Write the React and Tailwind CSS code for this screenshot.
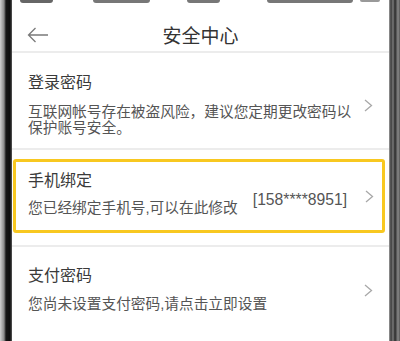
import React from "react";

const font = { fontFamily: '"Liberation Sans", "Noto Sans CJK SC", sans-serif' };

function Chevron({ className = "" }) {
  return (
    <svg width="9" height="13" viewBox="0 0 9 13" className={className}>
      <path d="M1 1 L7.5 6.5 L1 12" fill="none" stroke="#a8a8a8" strokeWidth="1.3" />
    </svg>
  );
}

export default function App() {
  return (
    <div className="w-[400px] h-[341px] overflow-hidden flex bg-white" style={font}>
      <div className="w-[12px] h-full bg-[linear-gradient(to_right,#d0d0d0_0px,#8a8a8a_4px,#151515_6px,#0d0d0d_10px,#5a5a5a_12px)]" />
      <div className="flex-1 flex flex-col bg-white">
        <div className="h-[4px] relative">
          <div className="absolute top-0 left-[8px] w-[33px] h-[3px] bg-[#666] rounded-b" />
          <div className="absolute top-0 left-[81px] w-[57px] h-[3px] bg-[#777] rounded-b" />
          <div className="absolute top-0 left-[175px] w-[33px] h-[3px] bg-[#777] rounded-b" />
          <div className="absolute top-0 left-[255px] w-[86px] h-[3px] bg-[#777] rounded-b" />
          <div className="absolute top-0 left-[348px] w-[20px] h-[2px] bg-[#999] rounded-b" />
        </div>
        <div className="h-[47px] flex items-center pt-[14px] relative">
          <svg width="22" height="16" viewBox="0 0 22 16" className="ml-[15px]">
            <path d="M21 8 H1.5 M8.5 1 L1.5 8 L8.5 15" fill="none" stroke="#7a7a7a" strokeWidth="1.3" />
          </svg>
          <div className="absolute left-0 right-0 top-[21px] text-center text-[19px] leading-[24px] text-[#333]">安全中心</div>
        </div>
        <div className="h-[2px] bg-[#ececec]" />

        <div className="flex items-center pl-[16px] pr-[16px] pt-[20px] pb-[12px]">
          <div className="w-[332px] flex flex-col">
            <div className="text-[16px] leading-[20px] text-[#3a3a3a]">登录密码</div>
            <div className="mt-[11px] text-[14.7px] leading-[16px] text-[#555]">
              互联网帐号存在被盗风险，建议您定期更改密码以保护账号安全。
            </div>
          </div>
          <div className="flex-1" />
          <Chevron className="mt-[2px]" />
        </div>
        <div className="h-[2px] bg-[#ececec]" />

        <div className="pt-[9px] pb-[12px] pl-[1px] pr-[4px]">
          <div className="border-[3px] border-[#f8c820] rounded-[3px] flex items-center pl-[12px] pr-[8px] pt-[9px] pb-[14px]">
            <div className="flex flex-col">
              <div className="text-[16px] leading-[20px] text-[#3a3a3a]">手机绑定</div>
              <div className="mt-[9px] text-[14.7px] leading-[16px] text-[#555]">您已经绑定手机号,可以在此修改</div>
            </div>
            <div className="flex-1" />
            <div className="mt-[12px] text-[15.7px] leading-[18px] text-[#555]">[158****8951]</div>
            <Chevron className="ml-[18px] mt-[6px]" />
          </div>
        </div>
        <div className="h-[2px] bg-[#ececec]" />

        <div className="flex items-center pl-[16px] pr-[16px] pt-[19px]">
          <div className="flex flex-col">
            <div className="text-[16px] leading-[20px] text-[#3a3a3a]">支付密码</div>
            <div className="mt-[10px] text-[14.7px] leading-[16px] text-[#555]">您尚未设置支付密码,请点击立即设置</div>
          </div>
          <div className="flex-1" />
          <Chevron className="mt-[2px]" />
        </div>
      </div>
      <div className="w-[11px] h-full bg-[linear-gradient(to_right,#a0a0a0_0px,#3a3a3a_2px,#7a7a7a_4px,#2a2a2a_6px,#8a8a8a_9px,#555_11px)]" />
    </div>
  );
}
